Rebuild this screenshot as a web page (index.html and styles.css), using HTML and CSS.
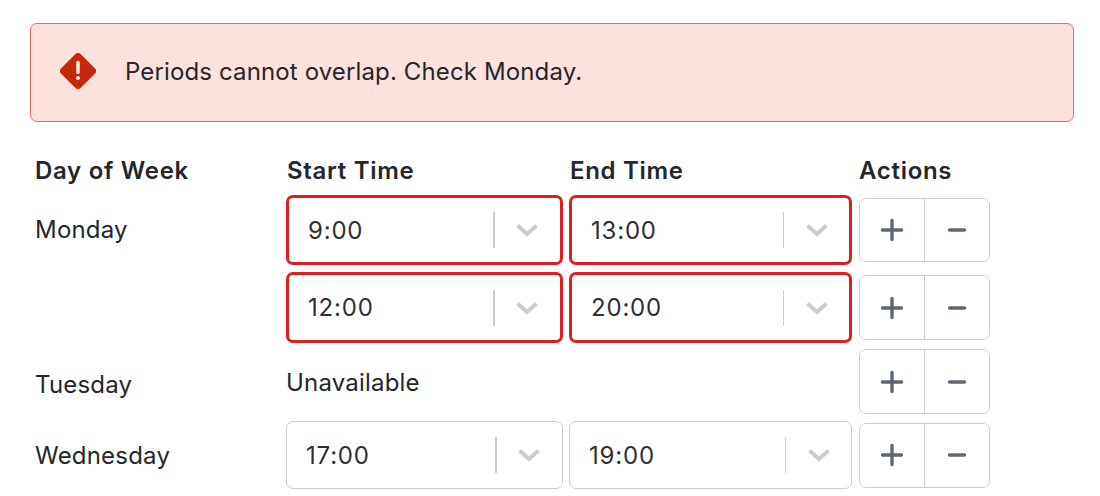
FILE: index.html
```html
<!DOCTYPE html>
<html lang="en">
<head>
<meta charset="utf-8">
<title>Availability</title>
<link rel="stylesheet" href="styles.css">
</head>
<body>
<main class="page">
  <div class="banner">
    <svg class="banner-icon" width="36" height="36" viewBox="0 0 36 36"><path class="diamond" d="M15.2 1.2a4 4 0 0 1 5.6 0l14 14a4 4 0 0 1 0 5.6l-14 14a4 4 0 0 1-5.6 0l-14-14a4 4 0 0 1 0-5.6z"/><path class="mark" d="M18 9.5v10"/><circle class="dot" cx="18" cy="25" r="2.1"/></svg>
    <span class="banner-text">Periods cannot overlap. Check Monday.</span>
  </div>
  <div class="schedule">
    <div class="row head">
      <div>Day of Week</div><div class="nudge">Start Time</div><div class="nudge">End Time</div><div>Actions</div>
    </div>
    <div class="row r1">
      <div class="day">Monday</div>
      <div class="select error"><span class="val">9:00</span><i class="sep"></i><svg class="chev" width="24" height="14" viewBox="0 0 24 14"><path d="M2.5 2.5l9.5 8.5 9.5-8.5"/></svg></div>
      <div class="select error wide"><span class="val">13:00</span><i class="sep thin"></i><svg class="chev" width="24" height="14" viewBox="0 0 24 14"><path d="M2.5 2.5l9.5 8.5 9.5-8.5"/></svg></div>
      <div class="actions"><button><svg width="24" height="24" viewBox="0 0 24 24"><path d="M12 2.5v19M2.5 12h19"/></svg></button><button><svg width="24" height="24" viewBox="0 0 24 24"><path d="M4.5 12h15"/></svg></button></div>
    </div>
    <div class="row r2">
      <div class="day"></div>
      <div class="select error"><span class="val">12:00</span><i class="sep"></i><svg class="chev" width="24" height="14" viewBox="0 0 24 14"><path d="M2.5 2.5l9.5 8.5 9.5-8.5"/></svg></div>
      <div class="select error wide"><span class="val">20:00</span><i class="sep thin"></i><svg class="chev" width="24" height="14" viewBox="0 0 24 14"><path d="M2.5 2.5l9.5 8.5 9.5-8.5"/></svg></div>
      <div class="actions"><button><svg width="24" height="24" viewBox="0 0 24 24"><path d="M12 2.5v19M2.5 12h19"/></svg></button><button><svg width="24" height="24" viewBox="0 0 24 24"><path d="M4.5 12h15"/></svg></button></div>
    </div>
    <div class="row r3">
      <div class="day low">Tuesday</div>
      <div class="na">Unavailable</div>
      <div></div>
      <div class="actions"><button><svg width="24" height="24" viewBox="0 0 24 24"><path d="M12 2.5v19M2.5 12h19"/></svg></button><button><svg width="24" height="24" viewBox="0 0 24 24"><path d="M4.5 12h15"/></svg></button></div>
    </div>
    <div class="row r4">
      <div class="day wed">Wednesday</div>
      <div class="select plain"><span class="val">17:00</span><i class="sep"></i><svg class="chev" width="24" height="14" viewBox="0 0 24 14"><path d="M2.5 2.5l9.5 8.5 9.5-8.5"/></svg></div>
      <div class="select plain wide"><span class="val">19:00</span><i class="sep thin"></i><svg class="chev" width="24" height="14" viewBox="0 0 24 14"><path d="M2.5 2.5l9.5 8.5 9.5-8.5"/></svg></div>
      <div class="actions"><button><svg width="24" height="24" viewBox="0 0 24 24"><path d="M12 2.5v19M2.5 12h19"/></svg></button><button><svg width="24" height="24" viewBox="0 0 24 24"><path d="M4.5 12h15"/></svg></button></div>
    </div>
  </div>
</main>
</body>
</html>
```
FILE: styles.css
```css
* { box-sizing: border-box; }
html, body { margin: 0; height: 100%; overflow: hidden; background: #fff; }
body { font-family: Inter, "Liberation Sans", sans-serif; color: #24272b; font-size: 24px; letter-spacing: .2px; }
.page { padding: 23px 26px 0 30px; }
.banner {
  display: flex; align-items: center; gap: 29px;
  height: 99px; padding-left: 29px; padding-bottom: 1px;
  background: #fde1dd; border: 1px solid #ec6c5c; border-radius: 7px;
  letter-spacing: .13px;
}
.banner-icon { flex: none; margin-top: -2px; }
.banner-text { margin-top: -2px; }
.diamond { fill: #c5290c; }
.mark { stroke: #fde1dd; stroke-width: 3.6; stroke-linecap: round; fill: none; }
.dot { fill: #fde1dd; }
.schedule { padding-left: 5px; }
.row { display: grid; grid-template-columns: 251px 283px 290px 131px; align-items: center; }
.head { font-weight: 600; height: 73px; align-items: end; padding-bottom: 10px; letter-spacing: .7px; }
.nudge { padding-left: 1px; }
.r1 { height: 70px; margin-bottom: 7px; }
.r2 { height: 71px; margin-bottom: 6px; }
.r3 { height: 65px; margin-bottom: 7px; }
.r4 { height: 68px; }
.day { padding-bottom: 1px; }
.low { padding-top: 7px; }
.wed { padding-top: 1px; padding-bottom: 0; }
.na { padding-top: 2px; }
.select {
  display: flex; align-items: center; width: 277px; height: 100%;
  background: #fff; border-radius: 7px; padding-left: 19px;
}
.select.wide { width: 283px; }
.error { border: 3px solid #dc1f1f; }
.plain { border: 1px solid #ccc; }
.val { flex: 1; letter-spacing: .8px; color: #2e3033; }
.sep { width: 2px; height: 36px; background: #ccc; }
.sep.thin { width: 1px; }
.chev { flex: none; margin: 0 21px 0 20px; }
.wide .chev { margin: 0 20px 0 21px; }
.chev path { fill: none; stroke: #ccc; stroke-width: 4; }
.actions { display: flex; width: 131px; height: 65px; border: 1px solid #cbcdd1; border-radius: 7px; overflow: hidden; }
.r1 .actions { height: 64px; }
.actions button { flex: 1; display: flex; align-items: center; justify-content: center; padding: 0; background: #fff; border: 0; }
.actions button + button { border-left: 1px solid #cbcdd1; }
.actions path { fill: none; stroke: #5f6774; stroke-width: 3.4; stroke-linecap: round; }
```
